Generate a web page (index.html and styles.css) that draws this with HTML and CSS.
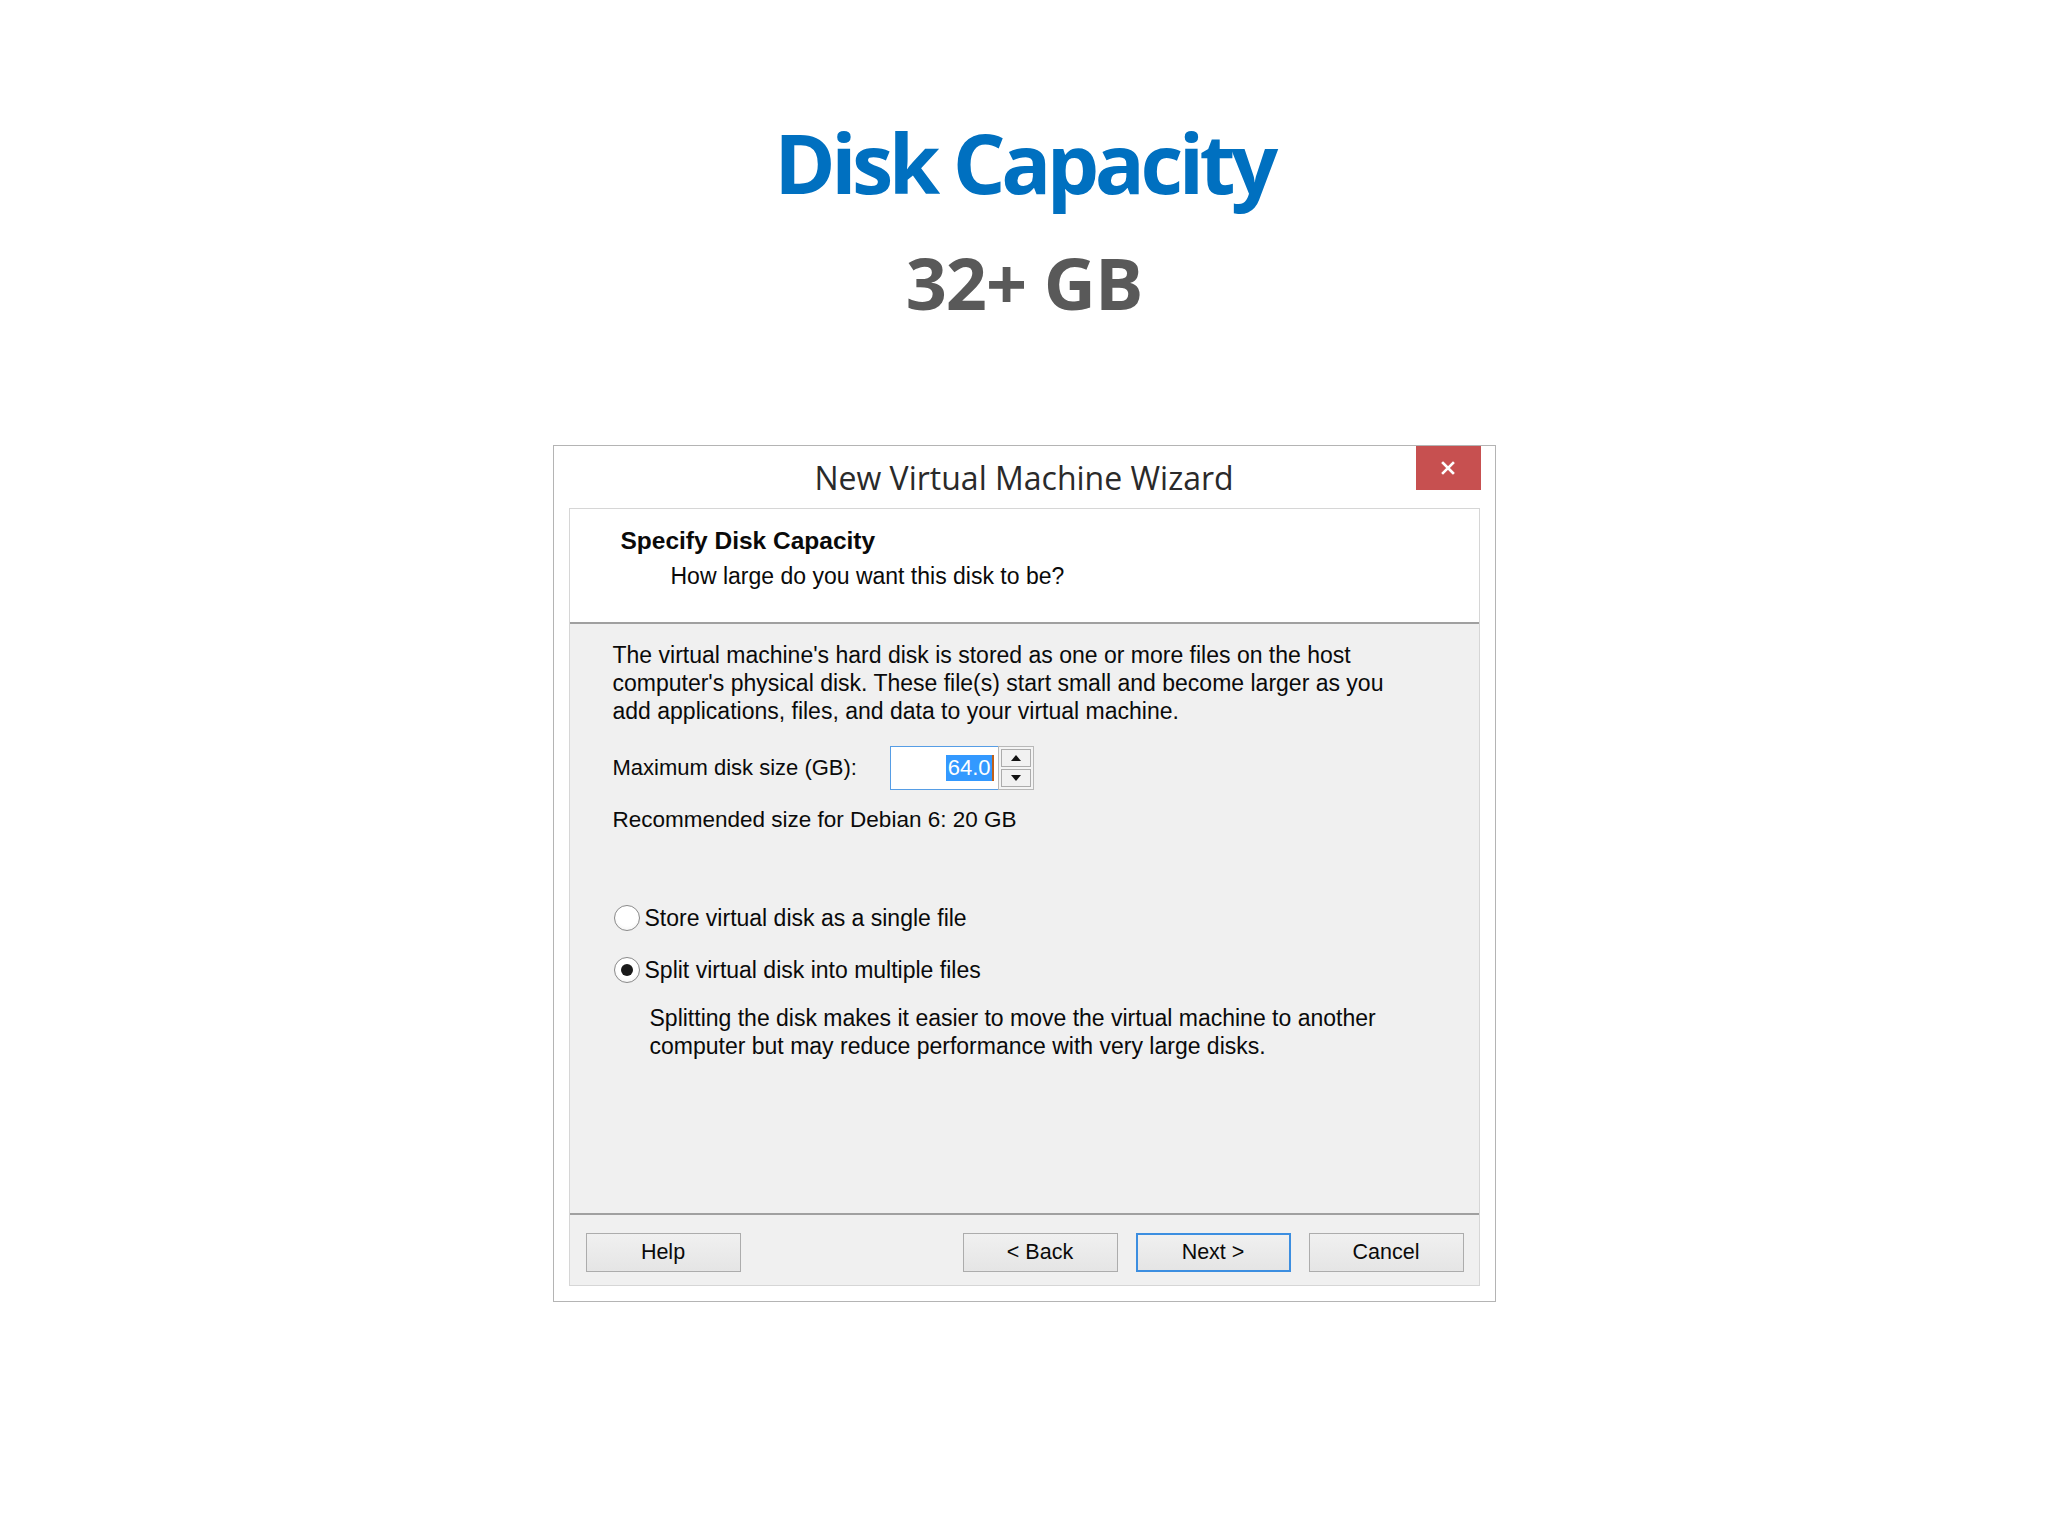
FILE: index.html
```html
<!DOCTYPE html>
<html lang="en">
<head>
<meta charset="utf-8">
<title>Disk Capacity</title>
<link rel="stylesheet" href="styles.css">
</head>
<body>
<main class="slide">
  <h1 class="slide-title">Disk Capacity</h1>
  <p class="slide-sub">32+ GB</p>

  <section class="dialog">
    <header class="titlebar">
      <span class="titlebar-text">New Virtual Machine Wizard</span>
      <button class="close-btn" aria-label="Close">
        <svg width="16" height="16" viewBox="0 0 16 16"><path d="M3 3 L13 13 M13 3 L3 13" stroke="#fff" stroke-width="2.6" stroke-linecap="square"/></svg>
      </button>
    </header>

    <div class="panel">
      <div class="panel-head">
        <div class="head-title">Specify Disk Capacity</div>
        <div class="head-sub">How large do you want this disk to be?</div>
      </div>

      <div class="panel-body">
        <p class="para">The virtual machine's hard disk is stored as one or more files on the host<br>computer's physical disk. These file(s) start small and become larger as you<br>add applications, files, and data to your virtual machine.</p>

        <div class="size-row">
          <span class="size-label">Maximum disk size (GB):</span>
          <div class="spin">
            <div class="spin-input"><span class="sel">64.0</span><span class="caret"></span></div>
            <div class="spin-btns">
              <span class="spin-btn"><svg width="10" height="6" viewBox="0 0 10 6"><path d="M0 6 L5 0 L10 6 Z" fill="#111"/></svg></span>
              <span class="spin-btn"><svg width="10" height="6" viewBox="0 0 10 6"><path d="M0 0 L5 6 L10 0 Z" fill="#111"/></svg></span>
            </div>
          </div>
        </div>

        <p class="recommend">Recommended size for Debian 6: 20 GB</p>

        <label class="radio-row first"><span class="radio"></span><span>Store virtual disk as a single file</span></label>
        <label class="radio-row second"><span class="radio checked"></span><span>Split virtual disk into multiple files</span></label>
        <p class="desc">Splitting the disk makes it easier to move the virtual machine to another<br>computer but may reduce performance with very large disks.</p>
      </div>

      <div class="panel-foot">
        <button class="btn">Help</button>
        <div class="foot-right">
          <button class="btn">&lt; Back</button>
          <button class="btn default">Next &gt;</button>
          <button class="btn">Cancel</button>
        </div>
      </div>
    </div>
  </section>
</main>
</body>
</html>
```

FILE: styles.css
```css
* { box-sizing: border-box; }
html, body { margin: 0; padding: 0; background: #ffffff; }
body { width: 2048px; height: 1536px; overflow: hidden; }

.slide {
  display: flex;
  flex-direction: column;
  align-items: center;
  padding-top: 117px;
}

.slide-title {
  margin: 0;
  font-family: "Open Sans", "Noto Sans", sans-serif;
  font-weight: 700;
  font-size: 83px;
  line-height: 90px;
  letter-spacing: -4.5px;
  color: #0070c0;
}

.slide-sub {
  margin: 37px 0 0 0;
  font-family: "Open Sans", "Noto Sans", sans-serif;
  font-weight: 700;
  font-size: 72px;
  line-height: 76px;
  letter-spacing: -1px;
  color: #595959;
}

.dialog {
  margin-top: 125px;
  width: 943px;
  height: 857px;
  border: 1px solid #b4b4b4;
  background: #ffffff;
  padding: 0 15px 15px 15px;
  display: flex;
  flex-direction: column;
  position: relative;
  font-family: "Liberation Sans", Arial, sans-serif;
  color: #0a0a0a;
}

.titlebar {
  height: 62px;
  display: flex;
  align-items: center;
  justify-content: center;
}
.titlebar-text {
  font-family: "Open Sans", "Noto Sans", sans-serif;
  font-size: 32px;
  color: #2a2a2a;
}
.close-btn {
  position: absolute;
  top: 0;
  right: 14px;
  width: 65px;
  height: 44px;
  border: 0;
  padding: 0;
  background: #c75050;
  display: flex;
  align-items: center;
  justify-content: center;
}

.panel {
  flex: 1;
  border: 1px solid #d6d6d6;
  display: flex;
  flex-direction: column;
  background: #f0f0f0;
}

.panel-head {
  height: 115px;
  background: #ffffff;
  border-bottom: 2px solid #a0a0a0;
  padding: 18px 0 0 51px;
}
.head-title {
  font-weight: 700;
  font-size: 24.5px;
  line-height: 28px;
}
.head-sub {
  font-size: 23px;
  line-height: 28px;
  margin-top: 7px;
  padding-left: 50px;
}

.panel-body {
  height: 591px;
  padding: 17px 0 0 43px;
  font-size: 23px;
  line-height: 28px;
  border-bottom: 2px solid #a0a0a0;
}
.para { margin: 0; }

.size-row {
  margin-top: 21px;
  display: flex;
  align-items: center;
  height: 44px;
}
.size-label { width: 277px; font-size: 22px; }
.spin { display: flex; height: 44px; }
.spin-input {
  width: 108px;
  height: 44px;
  background: #fff;
  border: 1px solid #569de5;
  border-right: 0;
  display: flex;
  align-items: center;
  justify-content: flex-end;
  padding-right: 4px;
}
.sel {
  background: #3399ff;
  color: #fff;
  font-size: 22px;
  line-height: 26px;
  padding: 0 1px 0 2px;
}
.caret { width: 2px; height: 26px; background: #c0601a; }
.spin-btns {
  width: 36px;
  display: flex;
  flex-direction: column;
  border: 1px solid #b8b8b8;
  background: #f4f4f4;
  padding: 2px;
  gap: 2px;
}
.spin-btn {
  flex: 1;
  display: flex;
  align-items: center;
  justify-content: center;
  background: #f1f1f1;
  border: 1px solid #acacac;
}

.recommend { margin: 16px 0 0 0; font-size: 22.5px; }

.radio-row {
  display: flex;
  align-items: center;
  gap: 5px;
  height: 28px;
}
.radio-row.first { margin-top: 70px; }
.radio-row.second { margin-top: 24px; }
.radio {
  width: 26px;
  height: 26px;
  border-radius: 50%;
  border: 1.5px solid #8a8a8a;
  background: radial-gradient(circle at 50% 40%, #ffffff 55%, #ececec 100%);
  margin-left: 1px;
  display: flex;
  align-items: center;
  justify-content: center;
}
.radio.checked::after {
  content: "";
  width: 12px;
  height: 12px;
  border-radius: 50%;
  background: #1a1a1a;
}

.desc { margin: 20px 0 0 37px; }

.panel-foot {
  flex: 1;
  display: flex;
  justify-content: space-between;
  padding: 18px 15px 0 16px;
}
.foot-right { display: flex; gap: 18px; }
.btn {
  width: 155px;
  height: 39px;
  border: 1px solid #acacac;
  background: linear-gradient(#f0f0f0, #e5e5e5);
  font-family: "Liberation Sans", Arial, sans-serif;
  font-size: 21.5px;
  color: #0a0a0a;
  padding: 0;
}
.btn.default {
  border: 2px solid #3c8ee0;
}
```
